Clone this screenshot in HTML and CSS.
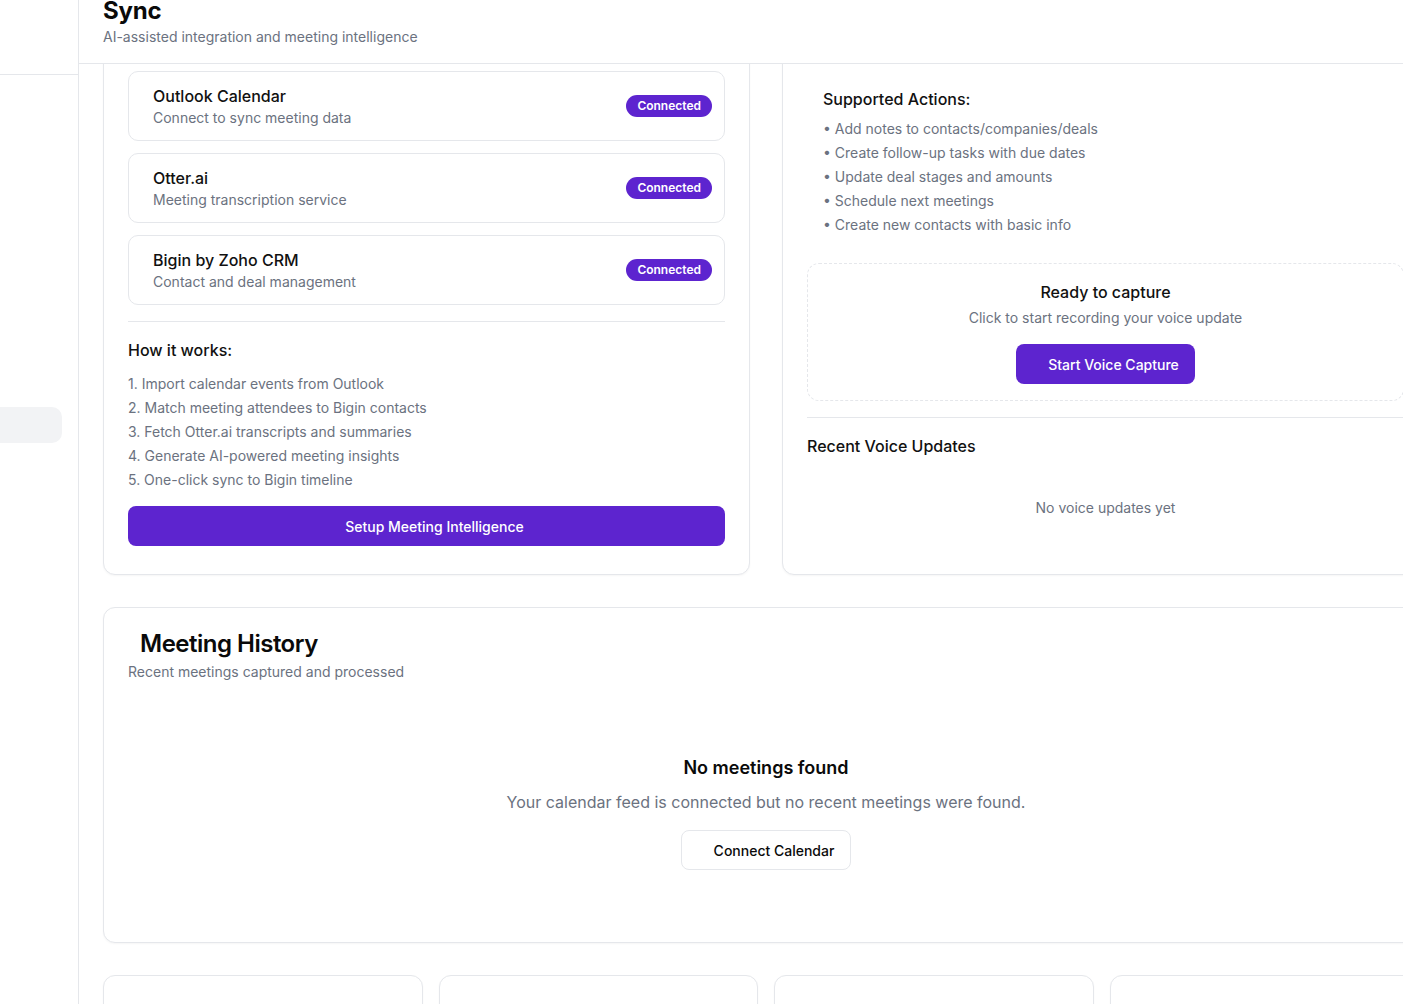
FILE: index.html
```html
<!DOCTYPE html>
<html lang="en">
<head>
<meta charset="utf-8">
<title>Sync</title>
<link rel="stylesheet" href="styles.css">
</head>
<body>
<div class="app">
  <aside class="sidebar">
    <div class="sidebar-head"></div>
    <div class="sidebar-nav">
      <div class="nav-item"></div>
    </div>
  </aside>
  <main class="main">
    <header class="page-header">
      <h1 class="page-title">Sync</h1>
      <p class="page-sub">AI-assisted integration and meeting intelligence</p>
    </header>
    <div class="viewport">
      <div class="content">
        <div class="grid-two">
          <section class="card card-left">
            <div class="integrations">
              <div class="integration">
                <div class="int-text">
                  <div class="int-name">Outlook Calendar</div>
                  <div class="int-desc">Connect to sync meeting data</div>
                </div>
                <span class="badge">Connected</span>
              </div>
              <div class="integration">
                <div class="int-text">
                  <div class="int-name">Otter.ai</div>
                  <div class="int-desc">Meeting transcription service</div>
                </div>
                <span class="badge">Connected</span>
              </div>
              <div class="integration">
                <div class="int-text">
                  <div class="int-name">Bigin by Zoho CRM</div>
                  <div class="int-desc">Contact and deal management</div>
                </div>
                <span class="badge">Connected</span>
              </div>
            </div>
            <div class="how">
              <h3 class="section-title">How it works:</h3>
              <ol class="steps">
                <li>1. Import calendar events from Outlook</li>
                <li>2. Match meeting attendees to Bigin contacts</li>
                <li>3. Fetch Otter.ai transcripts and summaries</li>
                <li>4. Generate AI-powered meeting insights</li>
                <li>5. One-click sync to Bigin timeline</li>
              </ol>
              <button class="btn-primary btn-wide btn-icon"><span class="icon-slot"></span>Setup Meeting Intelligence</button>
            </div>
          </section>
          <section class="card card-right">
            <div class="actions-box">
              <h3 class="section-title">Supported Actions:</h3>
              <ul class="bullets">
                <li>• Add notes to contacts/companies/deals</li>
                <li>• Create follow-up tasks with due dates</li>
                <li>• Update deal stages and amounts</li>
                <li>• Schedule next meetings</li>
                <li>• Create new contacts with basic info</li>
              </ul>
            </div>
            <div class="capture">
              <div class="capture-title">Ready to capture</div>
              <div class="capture-sub">Click to start recording your voice update</div>
              <button class="btn-primary btn-icon"><span class="icon-slot"></span>Start Voice Capture</button>
            </div>
            <div class="recent">
              <h3 class="section-title">Recent Voice Updates</h3>
              <div class="recent-empty">No voice updates yet</div>
            </div>
          </section>
        </div>
        <section class="card history">
          <div class="history-head">
            <h2 class="history-title"><span class="title-slot"></span>Meeting History</h2>
            <p class="history-sub">Recent meetings captured and processed</p>
          </div>
          <div class="history-body">
            <div class="empty">
              <div class="empty-title">No meetings found</div>
              <div class="empty-desc">Your calendar feed is connected but no recent meetings were found.</div>
              <button class="btn-outline btn-icon"><span class="icon-slot"></span>Connect Calendar</button>
            </div>
          </div>
        </section>
        <div class="stats">
          <div class="card stat"></div>
          <div class="card stat"></div>
          <div class="card stat"></div>
          <div class="card stat"></div>
        </div>
      </div>
    </div>
  </main>
</div>
</body>
</html>
```

FILE: styles.css
```css
* { box-sizing: border-box; }
html, body { margin: 0; padding: 0; height: 100%; }
body {
  font-family: Inter, "Noto Sans", "Liberation Sans", sans-serif;
  color: #0a0a0a;
  background: #ffffff;
  overflow: hidden;
}
h1, h2, h3, p, ol, ul { margin: 0; padding: 0; }
ol, ul { list-style: none; }
button { font-family: inherit; cursor: pointer; }

.app { display: flex; height: 1004px; width: 1403px; overflow: hidden; }

.sidebar {
  width: 79px;
  flex-shrink: 0;
  border-right: 1px solid #e5e7eb;
  display: flex;
  flex-direction: column;
  overflow: hidden;
}
.sidebar-head { height: 75px; border-bottom: 1px solid #e5e7eb; }
.sidebar-nav { padding-top: 332px; }
.nav-item {
  width: 82px;
  height: 36px;
  margin-left: -20px;
  border-radius: 10px;
  background: #f2f3f5;
}

.main { flex: 1; min-width: 0; display: flex; flex-direction: column; overflow: hidden; }

.page-header {
  height: 64px;
  flex-shrink: 0;
  border-bottom: 1px solid #e5e7eb;
  padding: 0 24px;
  overflow: hidden;
}
.page-title {
  font-size: 24px;
  line-height: 32px;
  font-weight: 700;
  color: #0a0a0a;
  margin-top: -5px;
  letter-spacing: -0.2px;
}
.page-sub { font-size: 14px; line-height: 20px; color: #6b7280; }

.viewport { flex: 1; overflow: hidden; }
.content {
  width: 1374px;
  padding: 0 24px;
  margin-top: -18px;
  display: flex;
  flex-direction: column;
  gap: 32px;
}

.card {
  border: 1px solid #e5e7eb;
  border-radius: 12px;
  background: #ffffff;
  box-shadow: 0 1px 2px rgba(0,0,0,0.04);
}

.grid-two { display: grid; grid-template-columns: 1fr 1fr; gap: 32px; }

.card-left, .card-right { padding: 24px; }

.integrations { display: flex; flex-direction: column; gap: 12px; }
.integration {
  height: 70px;
  border: 1px solid #e5e7eb;
  border-radius: 10px;
  padding: 12px 12px 12px 24px;
  display: flex;
  align-items: center;
  justify-content: space-between;
}
.int-name { font-size: 16px; line-height: 24px; font-weight: 500; color: #111111; }
.int-desc { font-size: 14px; line-height: 20px; color: #6b7280; }
.badge {
  background: #5d24cf;
  color: #ffffff;
  font-size: 12px;
  line-height: 16px;
  font-weight: 600;
  padding: 3px 11px;
  border-radius: 999px;
}

.how { border-top: 1px solid #e5e7eb; margin-top: 16px; padding-top: 16px; }
.section-title { font-size: 16px; line-height: 24px; font-weight: 500; color: #111111; }
.steps { margin-top: 12px; display: flex; flex-direction: column; gap: 4px; }
.steps li, .bullets li { font-size: 14px; line-height: 20px; color: #6b7280; }

.btn-primary {
  background: #5d24cf;
  color: #ffffff;
  border: none;
  border-radius: 8px;
  height: 40px;
  font-size: 14px;
  font-weight: 500;
  padding: 0 16px;
}
.btn-wide { width: 100%; margin-top: 16px; }
.btn-icon { display: inline-flex; align-items: center; justify-content: center; }
.btn-wide.btn-icon { display: flex; }
.icon-slot { width: 16px; height: 16px; display: inline-block; flex-shrink: 0; }

.actions-box { padding: 16px; border-radius: 10px; }
.bullets { margin-top: 8px; display: flex; flex-direction: column; gap: 4px; }

.capture {
  margin-top: 12px;
  border: 1px dashed #e5e7eb;
  border-radius: 12px;
  padding: 16px;
  display: flex;
  flex-direction: column;
  align-items: center;
  text-align: center;
}
.capture-title { font-size: 16px; line-height: 24px; font-weight: 500; color: #111111; }
.capture-sub { font-size: 14px; line-height: 20px; color: #6b7280; margin-top: 4px; }
.capture .btn-primary { margin-top: 16px; }

.recent { border-top: 1px solid #e5e7eb; margin-top: 16px; padding-top: 16px; }
.recent-empty {
  margin-top: 8px;
  padding: 32px 0;
  text-align: center;
  font-size: 14px;
  line-height: 20px;
  color: #6b7280;
}

.history-head { padding: 24px; }
.history-title {
  font-size: 24px;
  line-height: 24px;
  font-weight: 600;
  color: #0a0a0a;
  letter-spacing: -0.5px;
  display: flex;
  align-items: center;
}
.title-slot { width: 12px; display: inline-block; }
.history-sub { margin-top: 6px; font-size: 14px; line-height: 20px; color: #6b7280; }
.history-body { padding: 0 24px 24px; }
.empty {
  padding: 48px 0 48px;
  display: flex;
  flex-direction: column;
  align-items: center;
  text-align: center;
}
.empty-title { font-size: 18px; line-height: 28px; font-weight: 600; color: #0a0a0a; }
.empty-desc { margin-top: 8px; font-size: 16px; line-height: 24px; color: #6b7280; }
.btn-outline {
  margin-top: 16px;
  height: 40px;
  background: #ffffff;
  border: 1px solid #e5e7eb;
  border-radius: 8px;
  padding: 0 16px;
  font-size: 14px;
  font-weight: 500;
  color: #0a0a0a;
}

.stats { display: grid; grid-template-columns: repeat(4, 1fr); gap: 16px; }
.stat { height: 120px; }
```
